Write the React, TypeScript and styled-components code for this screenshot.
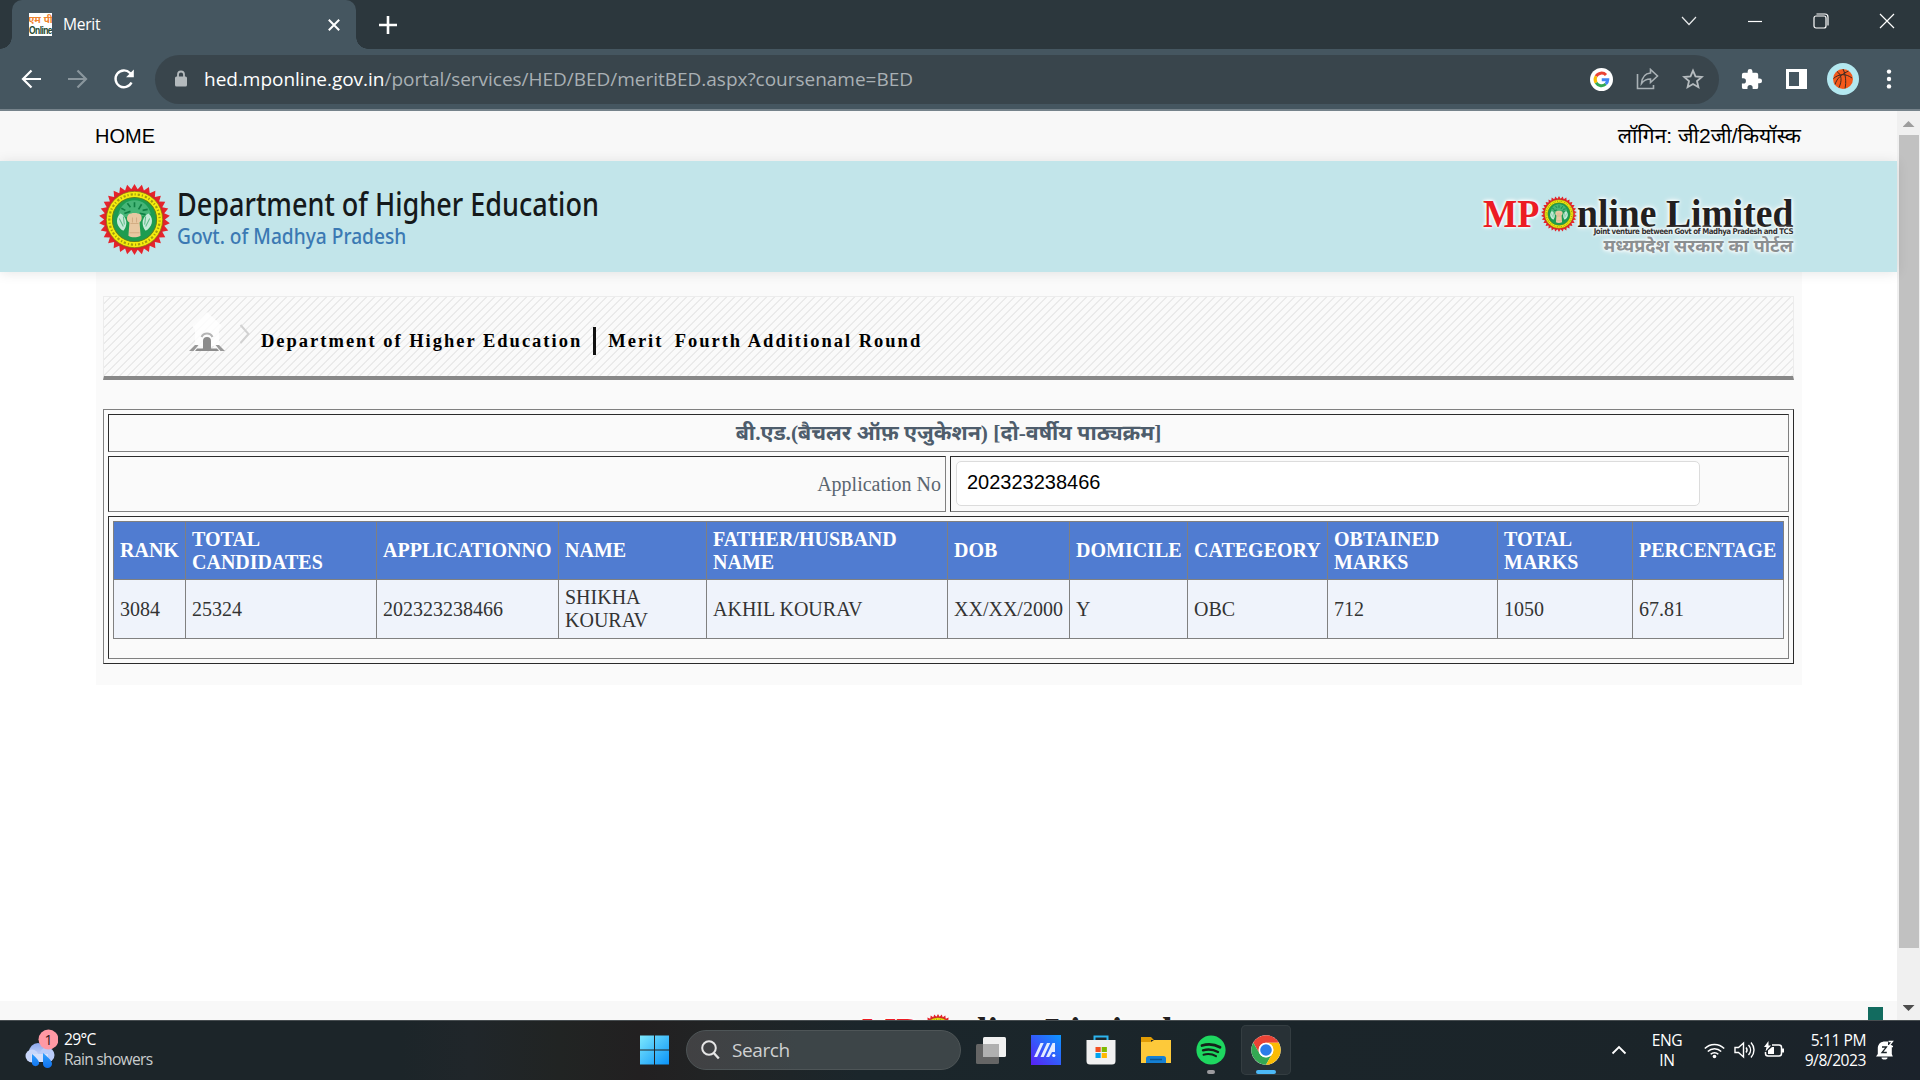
import React from "react";
import styled, { createGlobalStyle } from "styled-components";

const Global = createGlobalStyle`
  * { box-sizing: border-box; }
  html, body { margin: 0; padding: 0; width: 1920px; height: 1080px; overflow: hidden; }
`;
const ui = `"Open Sans", "Noto Sans", sans-serif`;
const serif = `"Liberation Serif", "Noto Sans Devanagari", serif`;
const sans = `"Liberation Sans", "Noto Sans Devanagari", sans-serif`;

const Screen = styled.div`
  width: 1920px; height: 1080px; display: flex; flex-direction: column; overflow: hidden;
  background: #fff; font-family: ${serif};
`;

/* ---------- browser chrome ---------- */
const TabStrip = styled.div`
  height: 49px; flex: none; background: #2c373d; display: flex; align-items: stretch; color: #fff;
`;
const Tab = styled.div`
  margin-left: 12px; width: 344px; background: #455660; border-radius: 10px 10px 0 0;
  display: flex; align-items: center; padding: 0 16px 0 17px; position: relative;
  &::before, &::after {
    content: ""; position: absolute; bottom: 0; width: 12px; height: 12px;
  }
  &::before { left: -12px; background: radial-gradient(circle at 0 0, #2c373d 11.5px, #455660 12px); }
  &::after { right: -12px; background: radial-gradient(circle at 100% 0, #2c373d 11.5px, #455660 12px); }
`;
const Favicon = styled.span`
  width: 23px; height: 23px; background: #fff; overflow: hidden; display: flex; flex-direction: column;
  align-items: center; justify-content: center; font: bold 9px/10px ${sans}; white-space: nowrap;
`;
const FavTop = styled.span`color: #f0842f; font-size: 10px; line-height: 11px;`;
const FavBottom = styled.span`color: #24482f; font-size: 8.5px; letter-spacing: -0.6px; transform: scaleY(1.3); line-height: 11px;`;
const TabTitle = styled.span`flex: 1; margin: -1px 0 0 11px; font: 15.6px/20px ${ui}; letter-spacing: -0.3px;`;
const NewTab = styled.div`width: 20px; margin-left: 23px; display: flex; align-items: center;`;
const WindowButtons = styled.div`
  margin-left: auto; margin-right: 25px; display: flex; align-items: center; gap: 50px; height: 42px;
`;

const Toolbar = styled.div`
  height: 62px; flex: none; background: #455660; border-bottom: 2px solid #76838b;
  display: flex; align-items: center; padding: 0 22px 0 21px;
`;
const NavButtons = styled.div`display: flex; gap: 25px; width: 134px; align-items: center;`;
const Address = styled.div`
  width: 1564px; height: 49px; border-radius: 25px; background: #39454c; display: flex;
  align-items: center; padding: 0 15px 0 19px;
`;
const Url = styled.div`
  flex: 1; margin-left: 16px; font: 19px/26px ${ui}; color: #a9b0b4; white-space: nowrap;
  letter-spacing: -0.02px;
  b { font-weight: 400; color: #fff; }
`;
const AddressIcons = styled.div`display: flex; gap: 23px; align-items: center;`;
const ToolIcons = styled.div`display: flex; align-items: center; margin-left: 21px; flex: 1; gap: 23px;`;
const Avatar = styled.div`
  width: 32px; height: 32px; border-radius: 50%; background: #b3e8f0; display: grid; place-items: center;
  margin-left: -3px;
`;

/* ---------- page ---------- */
const Viewport = styled.div`height: 909px; flex: none; display: flex; overflow: hidden;`;
const Page = styled.div`width: 1897px; display: flex; flex-direction: column; height: 909px;`;
const TopNav = styled.div`
  height: 50px; flex: none; background: #f8f8f8; display: flex; justify-content: space-between;
  align-items: center; padding: 0 95px 1px; font: 20px/24px ${sans}; color: #000;
`;
const Login = styled.span`font-size: 21px; margin-right: 1px;`;
const Banner = styled.header`
  height: 111px; flex: none; background: #c2e5ea; display: flex; justify-content: space-between;
  padding: 0 104px 0 99px; box-shadow: 0 1px 12px rgba(0,0,0,.1);
  z-index: 1;
`;
const Dept = styled.div`display: flex; align-items: center; padding-top: 6px;`;
const DeptText = styled.div`margin: -3px 0 0 7px; white-space: nowrap;`;
const DeptName = styled.div`
  font: 500 32px/34px "Noto Sans", sans-serif; color: #15191b; width: 422px;
  transform-origin: 0 50%; transform: scaleX(.845);
`;
const DeptGovt = styled.div`
  font: 500 22px/28px "Noto Sans", sans-serif; color: #3b79b3; width: 280px;
  transform-origin: 0 50%; transform: scaleX(.87);
`;
const LogoBox = styled.div`
  width: 310px; display: flex; flex-direction: column; align-items: flex-end;
  text-shadow: 0 0 3px #fff, 0 0 4px #fff, 0 0 6px #fff;
`;
const LogoMain = styled.div`
  display: flex; align-items: center; width: 310px; height: 37px; font: bold 39px/37px "Liberation Serif", serif;
  color: #231f20; white-space: nowrap;
`;
const LogoMp = styled.span`color: #ec1c24; width: 58px; span { display: inline-block; transform-origin: 0 50%; transform: scaleX(.93); }`;
const LogoRest = styled.span`width: 216px; span { display: inline-block; transform-origin: 0 50%; transform: scaleX(.965); }`;
const LogoSub = styled.div`
  font: 700 7.9px/8px "DejaVu Sans", sans-serif; color: #333; margin-top: -4px; white-space: nowrap;
  letter-spacing: -.5px; transform-origin: 100% 50%; transform: scaleX(.89);
`;
const LogoHindi = styled.div`font: 700 18px/24px ${sans}; color: #8b8f91; white-space: nowrap; margin-top: -2px;`;

const Content = styled.main`
  width: 1706px; height: 413px; flex: none; margin-left: 96px; background: #fafafa; padding: 24px 8px 0 7px;
`;
const Crumbs = styled.div`
  height: 84px; border: 1px solid #ececec; border-bottom: 4px solid #888; display: flex;
  background: repeating-linear-gradient(135deg, #fafafa 0 3.6px, #e8e8e8 4.4px 4.9px, #fafafa 5.657px);
  padding: 15px 0 0 85px;
`;
const CrumbText = styled.div`
  font: bold 18.5px/30px ${serif}; letter-spacing: 2px; color: #000; display: flex; align-items: center;
  margin: 13px 0 0 10px; height: 32px; white-space: pre;
`;
const Round = styled.span`margin-left: -2px;`;
const Divider = styled.span`width: 3px; height: 28px; background: #111; margin: -1px 12px 0 11px;`;

const Outer = styled.section`
  margin-top: 29px; height: 255px; border: 1px solid; border-color: #808080 #2b2b2b #2b2b2b #808080;
  padding: 4px; display: flex; flex-direction: column; gap: 4px;
`;
const Cell = styled.div<{ $h: number; $w?: number }>`
  height: ${(p) => p.$h}px; ${(p) => (p.$w ? `width: ${p.$w}px;` : "flex: none;")}
  border: 1px solid; border-color: #2b2b2b #808080 #808080 #2b2b2b; padding: 4px;
`;
const Pair = styled.div`display: flex; gap: 4px;`;
const Title = styled(Cell)`
  display: flex; align-items: center; justify-content: center; color: #4e5d6c;
  font: bold 21.35px/30px ${serif}; white-space: nowrap;
`;
const Label = styled(Cell)`
  display: flex; align-items: center; justify-content: flex-end; color: #5b6670; font-size: 20px;
`;
const Field = styled.input`
  display: block; width: 744px; height: 45px; border: 1px solid #dcdcdc; border-radius: 5px; background: #fff;
  margin-left: 1px; padding: 0 0 2px 10px; font: 20px ${sans}; color: #000; outline: none;
`;
const Grid = styled.table`
  border-collapse: collapse; table-layout: fixed; width: 1671px; font: 20px/23px ${serif}; color: #333;
`;
const Th = styled.th`
  height: 58px; background: #507cd1; color: #fff; border: 1px solid #808080; text-align: left;
  padding: 0 0 0 6px; white-space: nowrap;
`;
const Td = styled.td`
  height: 59px; background: #eff3fb; border: 1px solid #808080; padding: 0 0 0 6px; white-space: nowrap;
`;
const Footer = styled.footer`
  margin-top: auto; height: 19px; flex: none; background: #f8f8f8; display: flex; overflow: hidden; 
`;
const FooterLogo = styled.div`margin-left: 862px; padding-top: 12px; width: 311px;`;
const ChatBox = styled.div`margin: 6px 14px 0 auto; width: 15px; height: 13px; background: #126b5f;`;

const Scroll = styled.div`
  width: 23px; background: #f0f0f0; display: flex; flex-direction: column; align-items: center;
`;
const Arrow = styled.div<{ $down?: boolean }>`
  width: 12px; height: 6px; background: ${(p) => (p.$down ? "#4d4d4d" : "#9d9d9d")};
  clip-path: ${(p) => (p.$down ? "polygon(0 0,100% 0,50% 100%)" : "polygon(50% 0,100% 100%,0 100%)")};
  margin-top: ${(p) => (p.$down ? 57 : 10)}px;
`;
const Thumb = styled.div`width: 20px; height: 813px; background: #c1c1c1; margin-top: 8px;`;

/* ---------- taskbar ---------- */
const Taskbar = styled.div`
  height: 60px; flex: none; display: flex; align-items: center; color: #fff; font: 15.6px/20px ${ui};
  border-top: 1px solid #474d50; padding-bottom: 1px;
  background: linear-gradient(90deg, #1c2529 0, #1c2529 400px, #20262a 470px, #212423 560px, #222021 640px, #212425 720px, #1b262b 860px, #1b2429 1700px, #1b222b 1920px);
`;
const Weather = styled.div`width: 639px; flex: none; padding-left: 24px; display: flex; align-items: center; gap: 6px;`;
const WeatherText = styled.div`margin-top: -2px; letter-spacing: -.7px; div + div { color: #c9cccd; }`;
const SearchBox = styled.div`
  width: 275px; flex: none; height: 40px; border-radius: 20px; margin: 0 15px 0 16px; padding: 0 14px;
  background: linear-gradient(90deg, #414143, #3d4548 40%); border: 1px solid #4e5557; display: flex; align-items: center; gap: 12px;
  font-size: 19px; letter-spacing: -.4px; color: #cfd1d2;
`;
const Apps = styled.div`display: flex; align-items: center; gap: 25px;`;
const AppTile = styled.div<{ $active?: boolean }>`
  width: ${(p) => (p.$active ? 50 : 30)}px; height: 50px; display: flex; justify-content: center; align-items: center;
  border-radius: 5px; position: relative; margin-left: ${(p) => (p.$active ? -10 : 0)}px;
  ${(p) => (p.$active ? "background:#283136;box-shadow:inset 0 0 0 1px #343d41;" : "")}
`;
const Pip = styled.span<{ $w: number; $c: string }>`
  position: absolute; bottom: 1px; left: 50%; width: ${(p) => p.$w}px; height: 4px; border-radius: 2px;
  margin-left: ${(p) => -p.$w / 2}px; background: ${(p) => p.$c};
`;
const Tray = styled.div`margin-left: auto; display: flex; align-items: center; padding-right: 26px;`;
const Lang = styled.div`width: 40px; text-align: center; margin: -1px 17px 0 20px; letter-spacing: -.4px;`;
const TrayIcons = styled.div`display: flex; gap: 9px; width: 82px; align-items: center;`;
const Clock = styled.div`
  width: 80px; margin: -1px 10px 0 0; letter-spacing: -.45px; white-space: nowrap;
  display: flex; flex-direction: column; align-items: flex-end;
`;

const starPoints = (cx: number, cy: number, ro: number, ri: number, n: number) =>
  Array.from({ length: n * 2 }, (_, i) => {
    const r = i % 2 ? ri : ro;
    const a = (i * Math.PI) / n - Math.PI / 2;
    return `${(cx + r * Math.cos(a)).toFixed(2)},${(cy + r * Math.sin(a)).toFixed(2)}`;
  }).join(" ");

const EmblemSvg = styled.svg`flex: none;`;
const Emblem = ({ size }: { size: number }) => (
  <EmblemSvg width={size} height={size} viewBox="0 0 70 70">
    <polygon points={starPoints(35, 35, 35, 30, 30)} fill="#e5242c" />
    <circle cx="35" cy="35" r="29.5" fill="#d8232a" />
    <circle cx="35" cy="35" r="27.8" fill="#f5ec0c" stroke="#8d7414" strokeWidth=".8" />
    <circle cx="35" cy="35" r="24.800" fill="none" stroke="#6d6a10" strokeWidth="2.200" strokeDasharray="2.200 1.800 1.200 2" strokeDashoffset="3" opacity=".6" />
    <circle cx="35" cy="35" r="21.800" fill="#1d9c50" stroke="#5b7f20" strokeWidth="1" />
    <path d="M19 30c2-9 8-14 16-14s14 5 16 13c-4 2-6 1-9 3-4-2-9-2-13 1-4-1-6-1-10-3Z" fill="#46b577" />
    <path d="M22 24l4 2M28 19l3 4M35 18v5M42 20l-3 5M48 25l-5 1M25 29l6-2M40 29l6 1" stroke="#0f7f43" strokeWidth="1.600" />
    <path d="M21 29c3 1 6 5 6 9 0 3-1 6-3 8-6-3-9-11-3-17ZM49 29c-3 1-6 5-6 9 0 3 1 6 3 8 6-3 9-11 3-17Z" fill="#c5ead8" />
    <path d="M20 34l4 8M24 32l1 8M50 34l-4 8M46 32l-1 8" stroke="#5dbb87" strokeWidth="1" />
    <path d="M29 30c3-2 9-2 12 0 2 3 1 6-1 8l1 13c-4 2-9 2-12 0l1-13c-3-2-3-5-1-8Z" fill="#e8c8a2" />
    <path d="M31 39h8M30 48h10M33 33v5M37 33v5" stroke="#d3ad84" strokeWidth="1" />
  </EmblemSvg>
);

const MpLogo = () => (
  <LogoBox>
    <LogoMain>
      <LogoMp><span>MP</span></LogoMp>
      <Emblem size={36} />
      <LogoRest><span>nline Limited</span></LogoRest>
    </LogoMain>
    <LogoSub>Joint venture between Govt of Madhya Pradesh and TCS</LogoSub>
    <LogoHindi>मध्यप्रदेश सरकार का पोर्टल</LogoHindi>
  </LogoBox>
);
const HeaderLogo = styled.div`padding-top: 34px;`;

const columns: [string, string, number][] = [
  ["RANK", "3084", 72],
  ["TOTAL\nCANDIDATES", "25324", 191],
  ["APPLICATIONNO", "202323238466", 182],
  ["NAME", "SHIKHA\nKOURAV", 148],
  ["FATHER/HUSBAND\nNAME", "AKHIL KOURAV", 241],
  ["DOB", "XX/XX/2000", 122],
  ["DOMICILE", "Y", 118],
  ["CATEGEORY", "OBC", 140],
  ["OBTAINED\nMARKS", "712", 170],
  ["TOTAL\nMARKS", "1050", 135],
  ["PERCENTAGE", "67.81", 151],
];
const Lines = styled.span`white-space: pre-line; display: block;`;
const CrumbArrow = styled.svg`margin: 12px 0 0 14px; flex: none;`;
const MenuDots = styled.svg`margin-left: 4px;`;

export default function App() {
  return (
    <Screen>
      <Global />
      <TabStrip>
        <Tab>
          <Favicon><FavTop>एम पी</FavTop><FavBottom>Online</FavBottom></Favicon>
          <TabTitle>Merit</TabTitle>
          <svg width="12" height="12" viewBox="0 0 12 12" stroke="#fff" strokeWidth="2"><path d="M.8.8l10.4 10.4M11.2.8L.8 11.2" /></svg>
        </Tab>
        <NewTab><svg width="18" height="18" viewBox="0 0 18 18" stroke="#fff" strokeWidth="2.600"><path d="M9 0v18M0 9h18" /></svg></NewTab>
        <WindowButtons>
          <svg width="16" height="14" viewBox="0 0 16 14" fill="none" stroke="#e8eaeb" strokeWidth="1.200"><path d="M1 3l7 7.500L15 3" /></svg>
          <svg width="16" height="14" viewBox="0 0 16 14" stroke="#fff" strokeWidth="1.200"><path d="M1 7.500h14" /></svg>
          <svg width="16" height="16" viewBox="0 0 16 16" fill="none" stroke="#fff" strokeWidth="1.200"><rect x="1" y="3" width="12" height="12" rx="2" /><path d="M3.500 1h8.500c2 0 3 1 3 3v8.500" /></svg>
          <svg width="16" height="16" viewBox="0 0 16 16" stroke="#fff" strokeWidth="1.200"><path d="M1 1l14 14M15 1L1 15" /></svg>
        </WindowButtons>
      </TabStrip>
      <Toolbar>
        <NavButtons>
          <svg width="21" height="20" viewBox="0 0 21 20" fill="none" stroke="#fff" strokeWidth="2.200"><path d="M20 10H2.500M10.500 1.500L2 10l8.500 8.500" /></svg>
          <svg width="21" height="20" viewBox="0 0 21 20" fill="none" stroke="#8a969d" strokeWidth="2.200"><path d="M1 10h17.500M10.500 1.500L19 10l-8.500 8.500" /></svg>
          <svg width="22" height="22" viewBox="0 0 22 22" fill="none" stroke="#fff" strokeWidth="2.400"><path d="M18.500 14.500A8.400 8.400 0 1 1 17 5l2 2" /><path d="M20.800 1.500v7.700h-7.700Z" fill="#fff" stroke="none" /></svg>
        </NavButtons>
        <Address>
          <svg width="14" height="18" viewBox="0 0 14 18"><rect x="1" y="6.500" width="12" height="10" rx="1.500" fill="#b4babd" /><path d="M4 7V4.500a3 3 0 0 1 6 0V7" fill="none" stroke="#b4babd" strokeWidth="1.800" /></svg>
          <Url><b>hed.mponline.gov.in</b>/portal/services/HED/BED/meritBED.aspx?coursename=BED</Url>
          <AddressIcons>
            <svg width="23" height="23" viewBox="0 0 46 46">
              <circle cx="23" cy="23" r="23" fill="#fff" />
              <g fill="none" strokeWidth="6">
                <path d="M12.200 16.500A12.500 12.500 0 0 1 32 14" stroke="#ea4335" />
                <path d="M12.200 29.500a12.500 12.500 0 0 1 0-13" stroke="#fbbc05" />
                <path d="M31.500 32a12.500 12.500 0 0 1-19.300-2.500" stroke="#34a853" />
                <path d="M23.500 23.300h12a12.500 12.500 0 0 1-4 8.700" stroke="#4285f4" />
              </g>
            </svg>
            <svg width="23" height="22" viewBox="0 0 23 22" fill="none" stroke="#a9b1b5" strokeWidth="1.600"><path d="M1.500 6v14.500h16V17" /><path d="M14.500 5V1.500l7 6.500-7 6.500V11c-4 0-6.500 1-9 4.500C6 9.500 9 5.500 14.500 5Z" /></svg>
            <svg width="22" height="22" viewBox="0 0 24 24" fill="none" stroke="#b6bcbf" strokeWidth="2"><path d="M12 2.800l2.700 6.400 6.900.6-5.200 4.500 1.500 6.700-5.900-3.500L6.100 21l1.500-6.700L2.400 9.800l6.900-.6Z" /></svg>
          </AddressIcons>
        </Address>
        <ToolIcons>
          <svg width="23" height="23" viewBox="0 0 24 24" fill="#fff"><path d="M20.500 11H19V7a2 2 0 0 0-2-2h-4V3.500a2.500 2.500 0 0 0-5 0V5H4a2 2 0 0 0-2 2v3.800h1.500a2.700 2.700 0 0 1 0 5.400H2V20a2 2 0 0 0 2 2h3.800v-1.500a2.700 2.700 0 0 1 5.400 0V22H17a2 2 0 0 0 2-2v-4h1.500a2.500 2.500 0 0 0 0-5Z" /></svg>
          <svg width="21" height="20" viewBox="0 0 21 20"><path fill="#fff" fillRule="evenodd" d="M0 0h21v20H0ZM3 3v14h10V3Z" /></svg>
          <Avatar>
            <svg width="20" height="20" viewBox="0 0 20 20"><circle cx="10" cy="10" r="10" fill="#f4591c" /><path d="M10 0c2.500 5 3.500 13 2 19.500M.5 9.500C6 4.500 13 4.500 19 9M4 2.500C9 6 9 12 6 18.500M15.500 2C9 5 4 9 2 15.500" fill="none" stroke="#3f2a22" strokeWidth="1" /></svg>
          </Avatar>
          <MenuDots width="6" height="20" viewBox="0 0 6 20" fill="#fff"><circle cx="3" cy="2.600" r="2.200" /><circle cx="3" cy="10" r="2.200" /><circle cx="3" cy="17.400" r="2.200" /></MenuDots>
        </ToolIcons>
      </Toolbar>

      <Viewport>
        <Page>
          <TopNav><span>HOME</span><Login>लॉगिन: जी2जी/कियॉस्क</Login></TopNav>
          <Banner>
            <Dept>
              <Emblem size={71} />
              <DeptText>
                <DeptName>Department of Higher Education</DeptName>
                <DeptGovt>Govt. of Madhya Pradesh</DeptGovt>
              </DeptText>
            </Dept>
            <HeaderLogo><MpLogo /></HeaderLogo>
          </Banner>
          <Content>
            <Crumbs>
              <svg width="36" height="40" viewBox="0 0 36 40">
                <path d="M18 0l15 14-3 3v17H6V17l-3-3Z" fill="#fff" opacity=".8" />
                <path d="M0 39l6-6h3.500L4.500 39ZM36 39l-6-6h-3.500l5 6Z" fill="#999" />
                <path d="M6 39l2-2.500h6V29a4 4 0 0 1 8 0v7.500h6l2 2.500Z" fill="#8c8c8c" />
                <path d="M12.500 25a6 6 0 0 1 11 0" stroke="#b5b5b5" strokeWidth="2" fill="none" />
              </svg>
              <CrumbArrow width="12" height="20" viewBox="0 0 12 20" fill="none" stroke="#d2d2d2" strokeWidth="2"><path d="M1.500 1l8 9-8 9" /></CrumbArrow>
              <CrumbText>Department of Higher Education<Divider />Merit{"  "}<Round>Fourth Additional Round</Round></CrumbText>
            </Crumbs>
            <Outer>
              <Title $h={38}>बी.एड.(बैचलर ऑफ़ एजुकेशन) [दो-वर्षीय पाठ्यक्रम]</Title>
              <Pair>
                <Label $h={56} $w={838}>Application No</Label>
                <Cell $h={56} $w={839}><Field defaultValue="202323238466" /></Cell>
              </Pair>
              <Cell $h={143}>
                <Grid>
                  <colgroup>{columns.map(([, , w], i) => <col key={i} style={{ width: w }} />)}</colgroup>
                  <thead><tr>{columns.map(([h]) => <Th key={h}><Lines>{h}</Lines></Th>)}</tr></thead>
                  <tbody><tr>{columns.map(([h, v]) => <Td key={h}><Lines>{v}</Lines></Td>)}</tr></tbody>
                </Grid>
              </Cell>
            </Outer>
          </Content>
          <Footer>
            <FooterLogo><MpLogo /></FooterLogo>
            <ChatBox />
          </Footer>
        </Page>
        <Scroll><Arrow /><Thumb /><Arrow $down /></Scroll>
      </Viewport>

      <Taskbar>
        <Weather>
          <svg width="34" height="42" viewBox="0 -4 34 42">
            <defs><linearGradient id="cl" x1="0" y1="0" x2="0" y2="1"><stop offset="0" stopColor="#8ba6ee" /><stop offset="1" stopColor="#dfe9fd" /></linearGradient>
              <linearGradient id="dr" x1="0" y1="0" x2="0" y2="1"><stop offset="0" stopColor="#2fa0ff" /><stop offset="1" stopColor="#1172ee" /></linearGradient></defs>
            <circle cx="14" cy="19" r="9" fill="url(#cl)" /><circle cx="8" cy="23" r="6.500" fill="#c9d7fa" /><circle cx="23" cy="22" r="7.500" fill="#b9ccfa" /><rect x="7" y="21" width="17" height="8" fill="#d5e0fb" />
            <path d="M8 21c5 4 8 8 7 10a3.800 3.500 0 0 1-7 0ZM19 20c6 5 9 8 9 11a4.500 4 0 0 1-9 0Z" fill="url(#dr)" />
            <circle cx="24.500" cy="6.500" r="10" fill="#ff99a4" /><text x="24.500" y="11.500" fontSize="14" fontFamily="Open Sans" textAnchor="middle" fill="#2a1518">1</text>
          </svg>
          <WeatherText><div>29°C</div><div>Rain showers</div></WeatherText>
        </Weather>
        <svg width="31" height="30" viewBox="0 0 31 30">
          <defs><linearGradient id="win" x1="0" y1="0" x2="1" y2="1"><stop offset="0" stopColor="#7de8fd" /><stop offset="1" stopColor="#0a93f8" /></linearGradient></defs>
          <path fill="url(#win)" d="M1 .5h14v14H1ZM16 .5h14v14H16ZM1 15.500h14v14H1ZM16 15.500h14v14H16Z" />
        </svg>
        <SearchBox>
          <svg width="19" height="20" viewBox="0 0 19 20" fill="none" stroke="#e6e6e6" strokeWidth="2"><circle cx="8" cy="8" r="6.800" /><path d="M12.800 13l5 5.500" strokeWidth="2.400" /></svg>
          Search
        </SearchBox>
        <Apps>
          <AppTile><svg width="30" height="29" viewBox="0 0 30 29"><rect x="7" y="1" width="23" height="20" rx="1.500" fill="#f1f1f1" /><rect x="0" y="8" width="23" height="20" rx="1.500" fill="#656565" /><rect x="7" y="8" width="16" height="13" fill="#b0b0b0" /></svg></AppTile>
          <AppTile>
            <svg width="30" height="30" viewBox="0 0 30 30">
              <defs><linearGradient id="ma" x1="0" y1="1" x2="1" y2="0"><stop offset="0" stopColor="#5a20f5" /><stop offset="1" stopColor="#0c97ff" /></linearGradient></defs>
              <path fill="url(#ma)" d="M0 0h30v30H0Z" />
              <path d="M3 22L9.500 8h3.200L6.200 22ZM9.500 22L16 8h3.200l-6.500 14ZM15 22l6.500-14H24v9h-3l-2.800 5Z" fill="#e4ecff" />
              <circle cx="22.800" cy="20.500" r="1.600" fill="#fff" />
            </svg>
          </AppTile>
          <AppTile><svg width="30" height="30" viewBox="0 0 30 30"><path d="M8.500 6V1.500h13V6" fill="none" stroke="#2cb4ee" strokeWidth="2" /><path d="M.5 5h29v21a3.500 3.500 0 0 1-3.500 3.500h-22A3.500 3.500 0 0 1 .5 26Z" fill="#f1f1f1" /><path fill="#f25022" d="M9.500 12h5.200v5H9.500Z" /><path fill="#7fba00" d="M15.700 12h5.200v5h-5.200Z" /><path fill="#00a4ef" d="M9.500 18h5.200v5H9.500Z" /><path fill="#ffb900" d="M15.700 18h5.200v5h-5.200Z" /></svg></AppTile>
          <AppTile><svg width="30" height="28" viewBox="0 0 30 28"><path d="M0 1h10l3 3h-3v7H0Z" fill="#e19c05" /><path d="M0 6h10l3-2h17v23H0Z" fill="#fdc93a" /><path d="M5 27v-4.500A2.500 2.500 0 0 1 7.500 20h15a2.500 2.500 0 0 1 2.500 2.500V27Z" fill="#1580d4" /><path d="M9 23.500h12" stroke="#0b5590" strokeWidth="1.500" /></svg></AppTile>
          <AppTile><svg width="30" height="30" viewBox="0 0 30 30"><circle cx="15" cy="15" r="14.600" fill="#1ed760" /><g fill="none" stroke="#14221a" strokeLinecap="round"><path d="M6 10.500c6-1.700 12.500-1.200 18 1.800" strokeWidth="2.800" /><path d="M7 15.300c5-1.400 10.500-.8 15 1.700" strokeWidth="2.400" /><path d="M7.500 19.700c4.500-1.100 9-.6 12.500 1.500" strokeWidth="2" /></g></svg><Pip $w={8} $c="#9b9b9f" /></AppTile>
          <AppTile $active><svg width="30" height="30" viewBox="0 0 48 48"><circle cx="24" cy="24" r="23.500" fill="#fff" /><path d="M3.650 12.250A23.500 23.500 0 0 1 44.350 12.250H24A11.750 11.750 0 0 0 13.820 29.870Z" fill="#ea4335" /><path d="M3.650 12.250A23.500 23.500 0 0 0 24 47.500L34.180 29.870A11.750 11.750 0 0 1 13.820 29.870Z" fill="#34a853" /><path d="M44.350 12.250A23.500 23.500 0 0 1 24 47.500L34.180 29.870A11.750 11.750 0 0 0 24 12.250Z" fill="#fbbc05" /><circle cx="24" cy="24" r="11.800" fill="#fff" /><circle cx="24" cy="24" r="9.300" fill="#2b7de9" /></svg><Pip $w={20} $c="#4cb9f7" /></AppTile>
        </Apps>
        <Tray>
          <svg width="16" height="10" viewBox="0 0 16 10" fill="none" stroke="#fff" strokeWidth="1.800"><path d="M1.500 8.500L8 2l6.500 6.500" /></svg>
          <Lang>ENG<br />IN</Lang>
          <TrayIcons>
            <svg width="21" height="17" viewBox="0 0 21 17" fill="none" stroke="#fff" strokeWidth="1.500"><path d="M.8 6.500a13.500 13.500 0 0 1 19.400 0M3.800 9.500a9.500 9.500 0 0 1 13.400 0M6.700 12.300a5.400 5.400 0 0 1 7.600 0" /><circle cx="10.500" cy="14.500" r="1.800" fill="#fff" stroke="none" /></svg>
            <svg width="21" height="18" viewBox="0 0 21 18" fill="none" stroke="#fff" strokeWidth="1.400"><path d="M1 6.500h3.500L9.500 2v14l-5-4.500H1Z" /><path d="M12 6.500c1.300 1.500 1.300 3.500 0 5M14.500 4c2.700 3 2.700 7 0 10M17 1.500c4 4.500 4 10.500 0 15" /></svg>
            <svg width="21" height="18" viewBox="0 0 21 18" fill="none" stroke="#fff" strokeWidth="1.500"><path d="M8 4h7a2.500 2.500 0 0 1 2.500 2.500v6A2.500 2.500 0 0 1 15 15H4a2.500 2.500 0 0 1-2.500-2.500V11" /><path d="M19 7.500v4" strokeWidth="2" /><path d="M4 13V9.500L8 6h2v7ZM4.500 0L0 6h2.500L1.500 10.500 7 4.500H4.500Z" fill="#fff" stroke="none" /></svg>
          </TrayIcons>
          <Clock><span>5:11 PM</span><span>9/8/2023</span></Clock>
          <svg width="18" height="20" viewBox="0 0 18 20"><path d="M0 16.500L1.800 14V7.500C2.500 3.500 5 1.500 9 1.500h3V5h3.800v9l1 2.500Z" fill="#fff" /><path d="M5.500 17.500h6a3 2 0 0 1-6 0" fill="#fff" /><path d="M6 7h4.500L6 12.500h4.800" stroke="#1b2429" strokeWidth="1.300" fill="none" /><path d="M12.500 1.500h4l-4 5h4.500" stroke="#fff" strokeWidth="1.300" fill="none" /></svg>
        </Tray>
      </Taskbar>
    </Screen>
  );
}
